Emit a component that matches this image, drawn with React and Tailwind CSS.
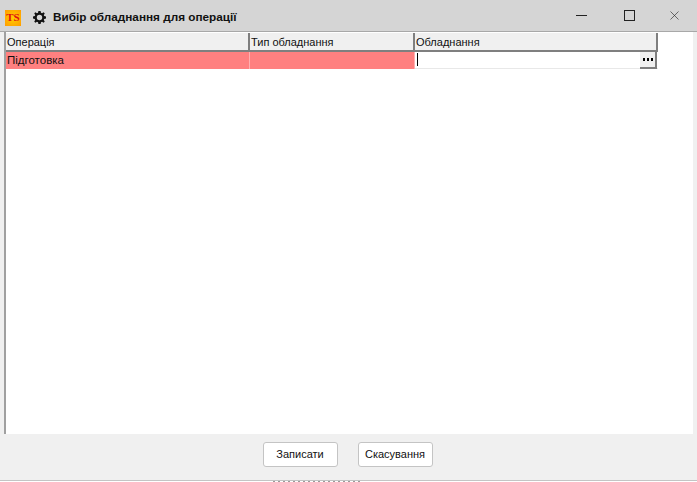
import { X } from "lucide-react";

const FONT = "font-['Liberation_Sans','Noto_Sans',sans-serif]";

function HeaderCell({ className, children }) {
  return (
    <div className={`h-[19px] bg-[#f0f0f0] border-r-2 border-b-2 border-[#7f7f7f] pl-[1px] pt-[1px] text-[11px] leading-[16px] text-[#111] ${className}`}>
      {children}
    </div>
  );
}

function GearIcon() {
  return (
    <svg width="13" height="13" viewBox="0 0 24 24" fill="#111">
      <path fillRule="evenodd" d="M10 0h4l.7 3.300 2 .8L19.600 2.300l2.100 2.100-1.800 2.900.8 2 3.300.7v4l-3.300.7-.8 2 1.800 2.900-2.100 2.100-2.900-1.800-2 .8L14 24h-4l-.7-3.300-2-.8-2.900 1.800-2.100-2.100 1.800-2.900-.8-2L0 14v-4l3.300-.7.8-2-1.800-2.900 2.100-2.100 2.900 1.800 2-.8L10 0zm2 7a5 5 0 1 0 0 10 5 5 0 0 0 0-10z" />
    </svg>
  );
}

export default function App() {
  return (
    <div className={`w-[697px] h-[482px] flex flex-col overflow-hidden bg-[#f0f0f0] ${FONT}`}>
      {/* Title bar */}
      <div className="h-[32px] shrink-0 flex items-center pt-[4px] bg-[#d5d5d5] border-b border-[#a8a8a8]">
        <div className="ml-[5px] w-[16px] h-[16px] flex items-center justify-center bg-[radial-gradient(circle,#ffd000,#ff9a00)] font-['Liberation_Serif',serif] font-bold text-[11px] leading-none text-[#e01010]">
          TS
        </div>
        <div className="ml-[12px] mb-[1px] flex items-center"><GearIcon /></div>
        <div className="ml-[7px] mb-[2px] text-[11.75px] font-bold text-[#111]">Вибір обладнання для операції</div>
        <div className="ml-auto flex items-center text-[#222] -mt-[4px]">
          <div className="w-[11px] h-[1px] mr-[37px] bg-[#222]" />
          <div className="w-[11px] h-[11px] mr-[32px] border border-[#222]" />
          <div className="mr-[15px] flex"><X size={15} strokeWidth={1} /></div>
        </div>
      </div>

      {/* Grid */}
      <div className="h-[402px] shrink-0 ml-[4px] mr-[4px] bg-white border-l-2 border-[#a0a0a0] pt-[1px]">
        <div className="flex">
          <HeaderCell className="w-[244px]">Операція</HeaderCell>
          <HeaderCell className="w-[165px]">Тип обладнання</HeaderCell>
          <HeaderCell className="w-[243px]">Обладнання</HeaderCell>
        </div>
        <div className="flex h-[17px] text-[11.5px] leading-[17px] text-[#111]">
          <div className="w-[243px] bg-[#ff8080] pl-[1px]">Підготовка</div>
          <div className="w-[1px] bg-[#ffb0b0]" />
          <div className="w-[164px] bg-[#ff8080]" />
          <div className="w-[1px] bg-[#ffb0b0]" />
          <div className="w-[243px] flex items-stretch border-b border-[#e8e8e8] bg-white">
            <div className="ml-[2px] mt-[1px] w-[1px] h-[13px] bg-black" />
            <div className="ml-auto w-[17px] h-[17px] mr-[1px] flex items-center justify-center gap-[2px] bg-[#f0f0f0] border-r-2 border-b-2 border-[#7f7f7f]">
              <span className="w-[2px] h-[3px] bg-black" />
              <span className="w-[2px] h-[3px] bg-black" />
              <span className="w-[2px] h-[3px] bg-black" />
            </div>
          </div>
        </div>
      </div>

      {/* Footer */}
      <div className="h-[46px] shrink-0 flex justify-center gap-[20px] pt-[8px] pr-[2px] bg-[#f0f0f0]">
        <button className="w-[75px] h-[25px] rounded-[3px] bg-white border border-[#c4c4c4] text-[11px] text-[#111]">Записати</button>
        <button className="w-[75px] h-[25px] rounded-[3px] bg-white border border-[#c4c4c4] text-[11px] text-[#111]">Скасування</button>
      </div>
      <div className="h-[1px] shrink-0 bg-[#c4c4c4]" />
      {/* clipped remains of whatever sits behind the dialog */}
      <div className="h-[1px] shrink-0 bg-white">
        <div className="ml-[273px] w-[90px] h-[1px] bg-[repeating-linear-gradient(90deg,#9a9a9a_0,#9a9a9a_2px,#ffffff_2px,#ffffff_5px)]" />
      </div>
    </div>
  );
}
